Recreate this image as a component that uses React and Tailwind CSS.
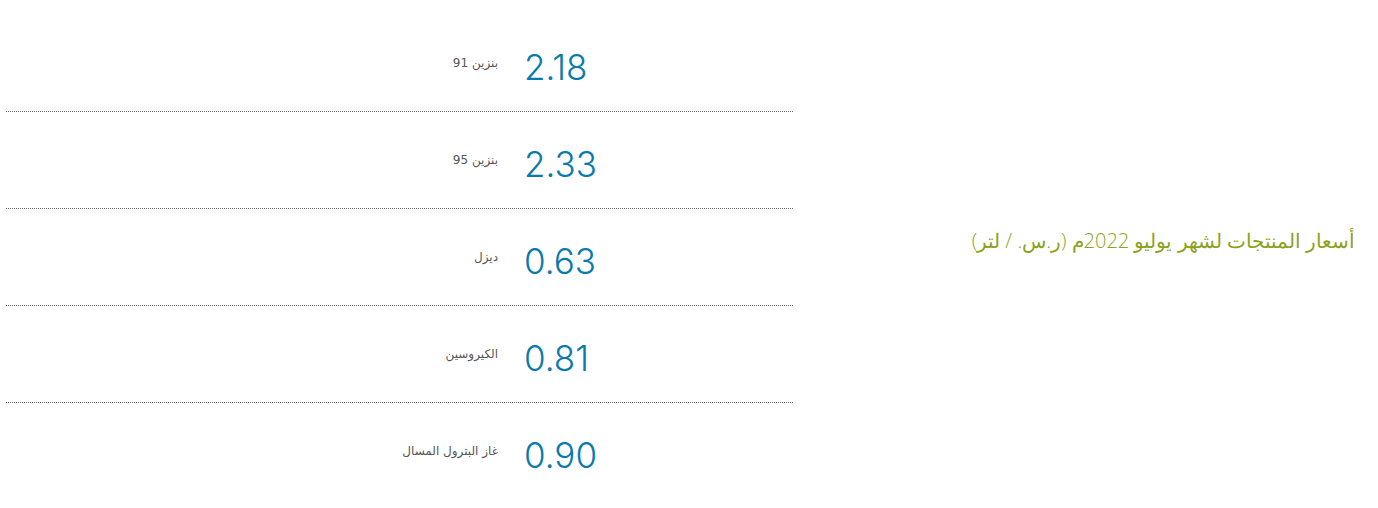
import React from 'react';

const prices = [
  { label: 'بنزين 91', value: '2.18' },
  { label: 'بنزين 95', value: '2.33' },
  { label: 'ديزل', value: '0.63' },
  { label: 'الكيروسين', value: '0.81' },
  { label: 'غاز البترول المسال', value: '0.90' },
];

export default function App() {
  return (
    <div className="w-[1378px] h-[508px] bg-white flex flex-row-reverse items-center pl-[6px] pr-[23px]" style={{ fontFamily: '"Open Sans", "DejaVu Sans", sans-serif' }}>
      {/* Title */}
      <div className="flex-1 flex justify-end pb-[26px]">
        <h2 dir="rtl" className="text-[20px] font-extralight text-[#8da21b] leading-none">
          أسعار المنتجات لشهر يوليو 2022م (ر.س. / لتر)
        </h2>
      </div>

      {/* Price list */}
      <div className="w-[787px] self-start pt-[15px]">
        {prices.map((item, i) => (
          <div
            key={item.value}
            className={`h-[97px] flex items-center ${i < prices.length - 1 ? 'border-b border-dotted border-[#666]' : ''}`}
          >
            <div dir="rtl" className="w-[492px] text-right text-[12px] text-[#555] -mt-[1px]" style={{ fontFamily: '"DejaVu Sans", sans-serif' }}>
              {item.label}
            </div>
            <div className="ml-[26px] mt-[8px] text-[35px] font-[260] text-[#0a7aad] leading-none" style={{ fontFamily: 'Inter, sans-serif' }}>
              {item.value}
            </div>
          </div>
        ))}
      </div>
    </div>
  );
}
